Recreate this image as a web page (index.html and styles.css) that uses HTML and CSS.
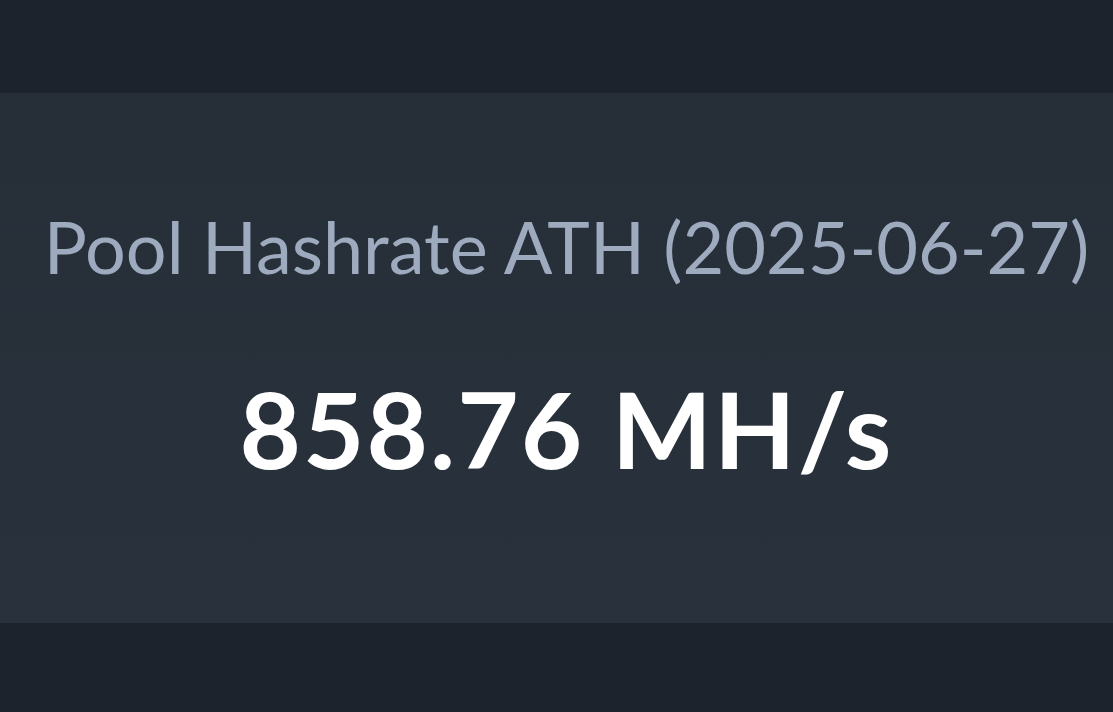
FILE: index.html
```html
<!DOCTYPE html>
<html lang="en">
<head>
    <meta charset="UTF-8">
    <title>Pool Hashrate ATH</title>
    <link rel="stylesheet" href="styles.css">
</head>
<body>
<div class="wrap">
    <div class="stat_card">
        <div class="stat_label">Pool Hashrate ATH (2025-06-27)</div>
        <div class="stat_value">858.76 MH/s</div>
    </div>
</div>
</body>
</html>
```

FILE: styles.css
```css
body {
    margin: 0;
    background: #1c232c;
    font-family: "Lato", "Noto Sans", sans-serif;
}
.wrap {
    padding: 93px 0 89px;
}
.stat_card {
    height: 530px;
    background: linear-gradient(#262e38, #29323c);
    padding: 117px 0 0 20px;
    box-sizing: border-box;

    display: flex;
    flex-direction: column;
    align-items: center;
}
.stat_label {
    font-size: 72px;
    color: #9eabbf;
    line-height: 1;
    white-space: nowrap;
}
.stat_value {
    margin-top: 93px;
    font-size: 106px;
    font-weight: 700;
    letter-spacing: 2px;
    color: #fff;
    line-height: 1;
    white-space: nowrap;
}
```
